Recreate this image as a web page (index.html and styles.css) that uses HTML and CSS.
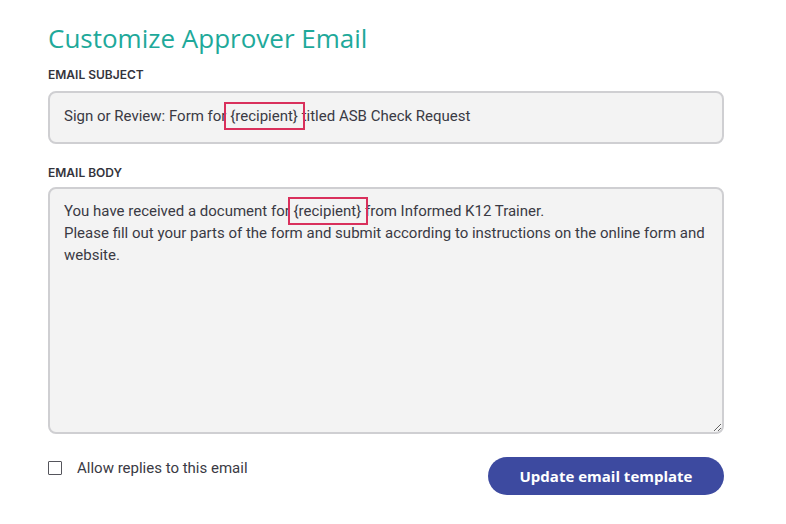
FILE: index.html
```html
<!DOCTYPE html>
<html lang="en">
<head>
    <meta charset="UTF-8">
    <meta name="viewport" content="width=device-width, initial-scale=1.0">
    <title>Customize Approver Email</title>
    <link rel="stylesheet" href="styles.css">
</head>
<body>
    <div class="container">
        <h1>Customize Approver Email</h1>

        <label class="field-label">Email Subject</label>
        <div class="field subject">Sign or Review: Form for <span class="mark">{recipient}</span> titled ASB Check Request</div>

        <label class="field-label body-label">Email Body</label>
        <div class="field body-text">
            You have received a document for <span class="mark">{recipient}</span> from Informed K12 Trainer.<br>
            Please fill out your parts of the form and submit according to instructions on the online form and website.
        </div>

        <div class="actions">
            <label class="check">
                <input type="checkbox">
                <span>Allow replies to this email</span>
            </label>
            <button class="update-btn">Update email template</button>
        </div>
    </div>
</body>
</html>
```

FILE: styles.css
```css
body {
    margin: 0;
    background: white;
    font-family: Roboto, "Liberation Sans", sans-serif;
    color: #3a3a44;
}

.container {
    width: 676px;
    padding: 22px 0 0 48px;
    display: flex;
    flex-direction: column;
}

h1 {
    margin: 0 0 13px;
    font-family: "Open Sans", sans-serif;
    font-weight: 400;
    font-size: 26px;
    line-height: 32px;
    color: #1ea99a;
}

.field-label {
    font-family: Inter, sans-serif;
    font-weight: 600;
    font-size: 12px;
    text-transform: uppercase;
    color: #34343c;
    margin-bottom: 9px;
}

.body-label {
    margin-bottom: 7px;
}

.field {
    background: #f3f3f3;
    border: 2px solid #cfcfd2;
    border-radius: 8px;
    font-size: 15px;
    line-height: 22px;
    padding: 0 14px;
    box-sizing: border-box;
}

.subject {
    height: 53px;
    line-height: 47px;
    white-space: nowrap;
    margin-bottom: 21px;
}

.body-text {
    height: 247px;
    padding-top: 11px;
    resize: vertical;
    overflow: auto;
}

.mark {
    position: relative;
}

.mark::after {
    content: "";
    position: absolute;
    left: -6px;
    right: -7px;
    top: -5px;
    bottom: -5px;
    border: 2px solid #d9305c;
}

.actions {
    display: flex;
    justify-content: space-between;
    align-items: flex-start;
    margin-top: 23px;
}

.check {
    display: flex;
    align-items: center;
    gap: 15px;
    font-size: 15px;
    padding-top: 2px;
}

.check input {
    appearance: none;
    width: 14px;
    height: 14px;
    margin: 0;
    border: 1.5px solid #55555c;
    border-radius: 1px;
}

.update-btn {
    width: 236px;
    height: 38px;
    border: none;
    border-radius: 19px;
    background: #3d4aa0;
    color: white;
    font-family: "Open Sans", sans-serif;
    font-weight: 700;
    font-size: 15px;
    cursor: pointer;
}
```
